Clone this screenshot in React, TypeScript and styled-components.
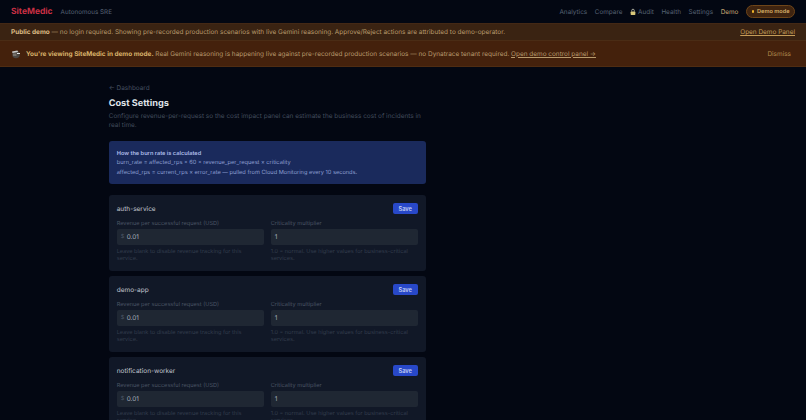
import React from "react";
import styled, { createGlobalStyle } from "styled-components";

const services = ["auth-service", "demo-app", "notification-worker"];

const GlobalStyle = createGlobalStyle`
  html, body {
    margin: 0;
    height: 100%;
    overflow: hidden;
    background: #030712;
  }
  body {
    font-family: Inter, "Liberation Sans", sans-serif;
    text-rendering: geometricPrecision;
    -webkit-font-smoothing: antialiased;
  }
  * {
    box-sizing: border-box;
  }
`;

const LockIcon = () => (
  <svg width="6" height="8" viewBox="0 0 14 16">
    <path d="M4 7V4.5a3 3 0 0 1 6 0V7" fill="none" stroke="#b9b9a8" strokeWidth="2" />
    <rect x="1.5" y="7" width="11" height="8" rx="1.5" fill="#d8c77a" />
  </svg>
);

const ClapperIcon = () => (
  <svg width="10" height="10" viewBox="0 0 20 20">
    <circle cx="10" cy="11" r="7.5" fill="#4b4743" />
    <path d="M2 5l11-2 1 3-11 2z" fill="#c9c9c9" />
    <path d="M12 8h6v2h-6z" fill="#e6e6e6" />
    <path d="M4 9h7v5H4z" fill="#77716b" />
  </svg>
);

const App = () => {
  return (
    <>
      <GlobalStyle />
      <Header>
        <Brand>
          <Logo>SiteMedic</Logo>
          <Tagline>Autonomous SRE</Tagline>
        </Brand>
        <Nav>
          <NavLink>Analytics</NavLink>
          <NavLink>Compare</NavLink>
          <NavLink>
            <LockIcon /> Audit
          </NavLink>
          <NavLink>Health</NavLink>
          <NavLink>Settings</NavLink>
          <NavLink $active>Demo</NavLink>
          <DemoPill>
            <Dot />
            Demo mode
          </DemoPill>
        </Nav>
      </Header>
      <PublicBanner>
        <span>
          <strong>Public demo</strong> — no login required. Showing pre-recorded production
          scenarios with live Gemini reasoning. Approve/Reject actions are attributed to
          demo-operator.
        </span>
        <PanelLink>Open Demo Panel</PanelLink>
      </PublicBanner>
      <ModeBanner>
        <ModeText>
          <ClapperIcon />
          <span>
            <strong>You're viewing SiteMedic in demo mode.</strong> Real Gemini reasoning is
            happening live against pre-recorded production scenarios — no Dynatrace tenant
            required. <u>Open demo control panel →</u>
          </span>
        </ModeText>
        <Dismiss>Dismiss</Dismiss>
      </ModeBanner>
      <Main>
        <BackLink>← Dashboard</BackLink>
        <Title>Cost Settings</Title>
        <Description>
          Configure revenue-per-request so the cost impact panel can estimate the business cost
          of incidents in real time.
        </Description>
        <InfoBox>
          <InfoTitle>How the burn rate is calculated</InfoTitle>
          <div>burn_rate = affected_rps × 60 × revenue_per_request × criticality</div>
          <div>affected_rps = current_rps × error_rate — pulled from Cloud Monitoring every 10 seconds.</div>
        </InfoBox>
        {services.map((name) => (
          <Card key={name}>
            <CardHead>
              <ServiceName>{name}</ServiceName>
              <SaveButton>Save</SaveButton>
            </CardHead>
            <Fields>
              <div>
                <Label>Revenue per successful request (USD)</Label>
                <InputBox>
                  <Prefix>$</Prefix>0.01
                </InputBox>
                <Hint>Leave blank to disable revenue tracking for this service.</Hint>
              </div>
              <div>
                <Label>Criticality multiplier</Label>
                <InputBox>1</InputBox>
                <Hint>1.0 = normal. Use higher values for business-critical services.</Hint>
              </div>
            </Fields>
          </Card>
        ))}
      </Main>
    </>
  );
};

export default App;

const Header = styled.header`
  height: 23px;
  padding: 0 11px;
  display: flex;
  justify-content: space-between;
  align-items: center;
  background: #030712;
`;

const Brand = styled.div`
  display: flex;
  align-items: center;
  gap: 8px;
`;

const Logo = styled.span`
  font-size: 8.5px;
  font-weight: 700;
  color: #c93044;
`;

const Tagline = styled.span`
  font-size: 6.3px;
  color: #566172;
`;

const Nav = styled.nav`
  display: flex;
  align-items: center;
  gap: 7.6px;
`;

const NavLink = styled.span<{ $active?: boolean }>`
  display: inline-flex;
  align-items: center;
  gap: 2px;
  font-size: 6.4px;
  color: ${(p) => (p.$active ? "#c9a873" : "#566172")};
`;

const DemoPill = styled.span`
  display: inline-flex;
  align-items: center;
  gap: 3px;
  height: 13px;
  padding: 0 4.5px;
  border-radius: 6.5px;
  border: 1px solid #6e4519;
  background: #3f2410;
  color: #d8b26a;
  font-size: 5.6px;
  font-weight: 600;
`;

const Dot = styled.span`
  width: 2.5px;
  height: 2.5px;
  border-radius: 50%;
  background: #f0b429;
`;

const PublicBanner = styled.div`
  height: 18px;
  padding: 0 11px;
  display: flex;
  justify-content: space-between;
  align-items: center;
  font-size: 6.44px;
  color: #b89a6c;
  background: #3a2312;
  border-top: 1px solid #432815;
  border-bottom: 1px solid #4a2c15;

  strong {
    color: #dcbd86;
  }
`;

const PanelLink = styled.span`
  color: #c49c58;
  text-decoration: underline;
`;

const ModeBanner = styled.div`
  height: 26px;
  padding: 0 15px 0 11px;
  display: flex;
  justify-content: space-between;
  align-items: center;
  font-size: 6.44px;
  color: #b89a6c;
  background: #44210c;
  border-bottom: 1px solid #4f2c12;

  strong {
    color: #d8b26a;
  }
`;

const ModeText = styled.div`
  display: flex;
  align-items: center;
  gap: 5px;
`;

const Dismiss = styled.span`
  color: #b08a4e;
`;

const Main = styled.main`
  width: 317px;
  margin-left: 108.7px;
  padding-top: 17px;
`;

const BackLink = styled.div`
  font-size: 6.4px;
  line-height: 8px;
  color: #465061;
`;

const Title = styled.h1`
  margin: 6px 0 2px;
  font-size: 9.2px;
  line-height: 12px;
  font-weight: 700;
  color: #dfe2e8;
`;

const Description = styled.p`
  margin: 0 0 11px;
  font-size: 6.45px;
  line-height: 9px;
  color: #414b5b;
`;

const InfoBox = styled.div`
  height: 43px;
  margin-bottom: 11px;
  padding: 8.5px 8px 0;
  border-radius: 3px;
  background: #1a2a5c;
  font-size: 5.65px;
  line-height: 9.6px;
  color: #8d9fd0;
`;

const InfoTitle = styled.div`
  font-weight: 600;
  color: #aebde8;
`;

const Card = styled.section`
  height: 75.5px;
  margin-bottom: 5.5px;
  padding: 8px;
  border-radius: 3px;
  background: #111827;
`;

const CardHead = styled.div`
  height: 11px;
  margin-bottom: 6px;
  display: flex;
  justify-content: space-between;
  align-items: center;
`;

const ServiceName = styled.span`
  font-size: 6.5px;
  font-weight: 400;
  color: #c0c5ce;
`;

const SaveButton = styled.button`
  width: 25px;
  height: 11px;
  padding: 0;
  border: 0;
  border-radius: 2px;
  background: #2848c8;
  color: #c3cff2;
  font-family: inherit;
  font-size: 5.7px;
  font-weight: 600;
`;

const Fields = styled.div`
  display: grid;
  grid-template-columns: 1fr 1fr;
  gap: 7px;
`;

const Label = styled.div`
  height: 8px;
  margin-bottom: 1px;
  font-size: 5.6px;
  line-height: 8px;
  color: #4a5464;
`;

const InputBox = styled.div`
  height: 16px;
  padding: 0 4px;
  display: flex;
  align-items: center;
  gap: 2.5px;
  border-radius: 2px;
  background: #1f2733;
  font-size: 6.4px;
  color: #a5adba;
`;

const Prefix = styled.span`
  color: #4a5464;
  font-size: 5.5px;
`;

const Hint = styled.div`
  margin-top: 3.5px;
  font-size: 5.6px;
  line-height: 7.7px;
  color: #333d4d;
`;
